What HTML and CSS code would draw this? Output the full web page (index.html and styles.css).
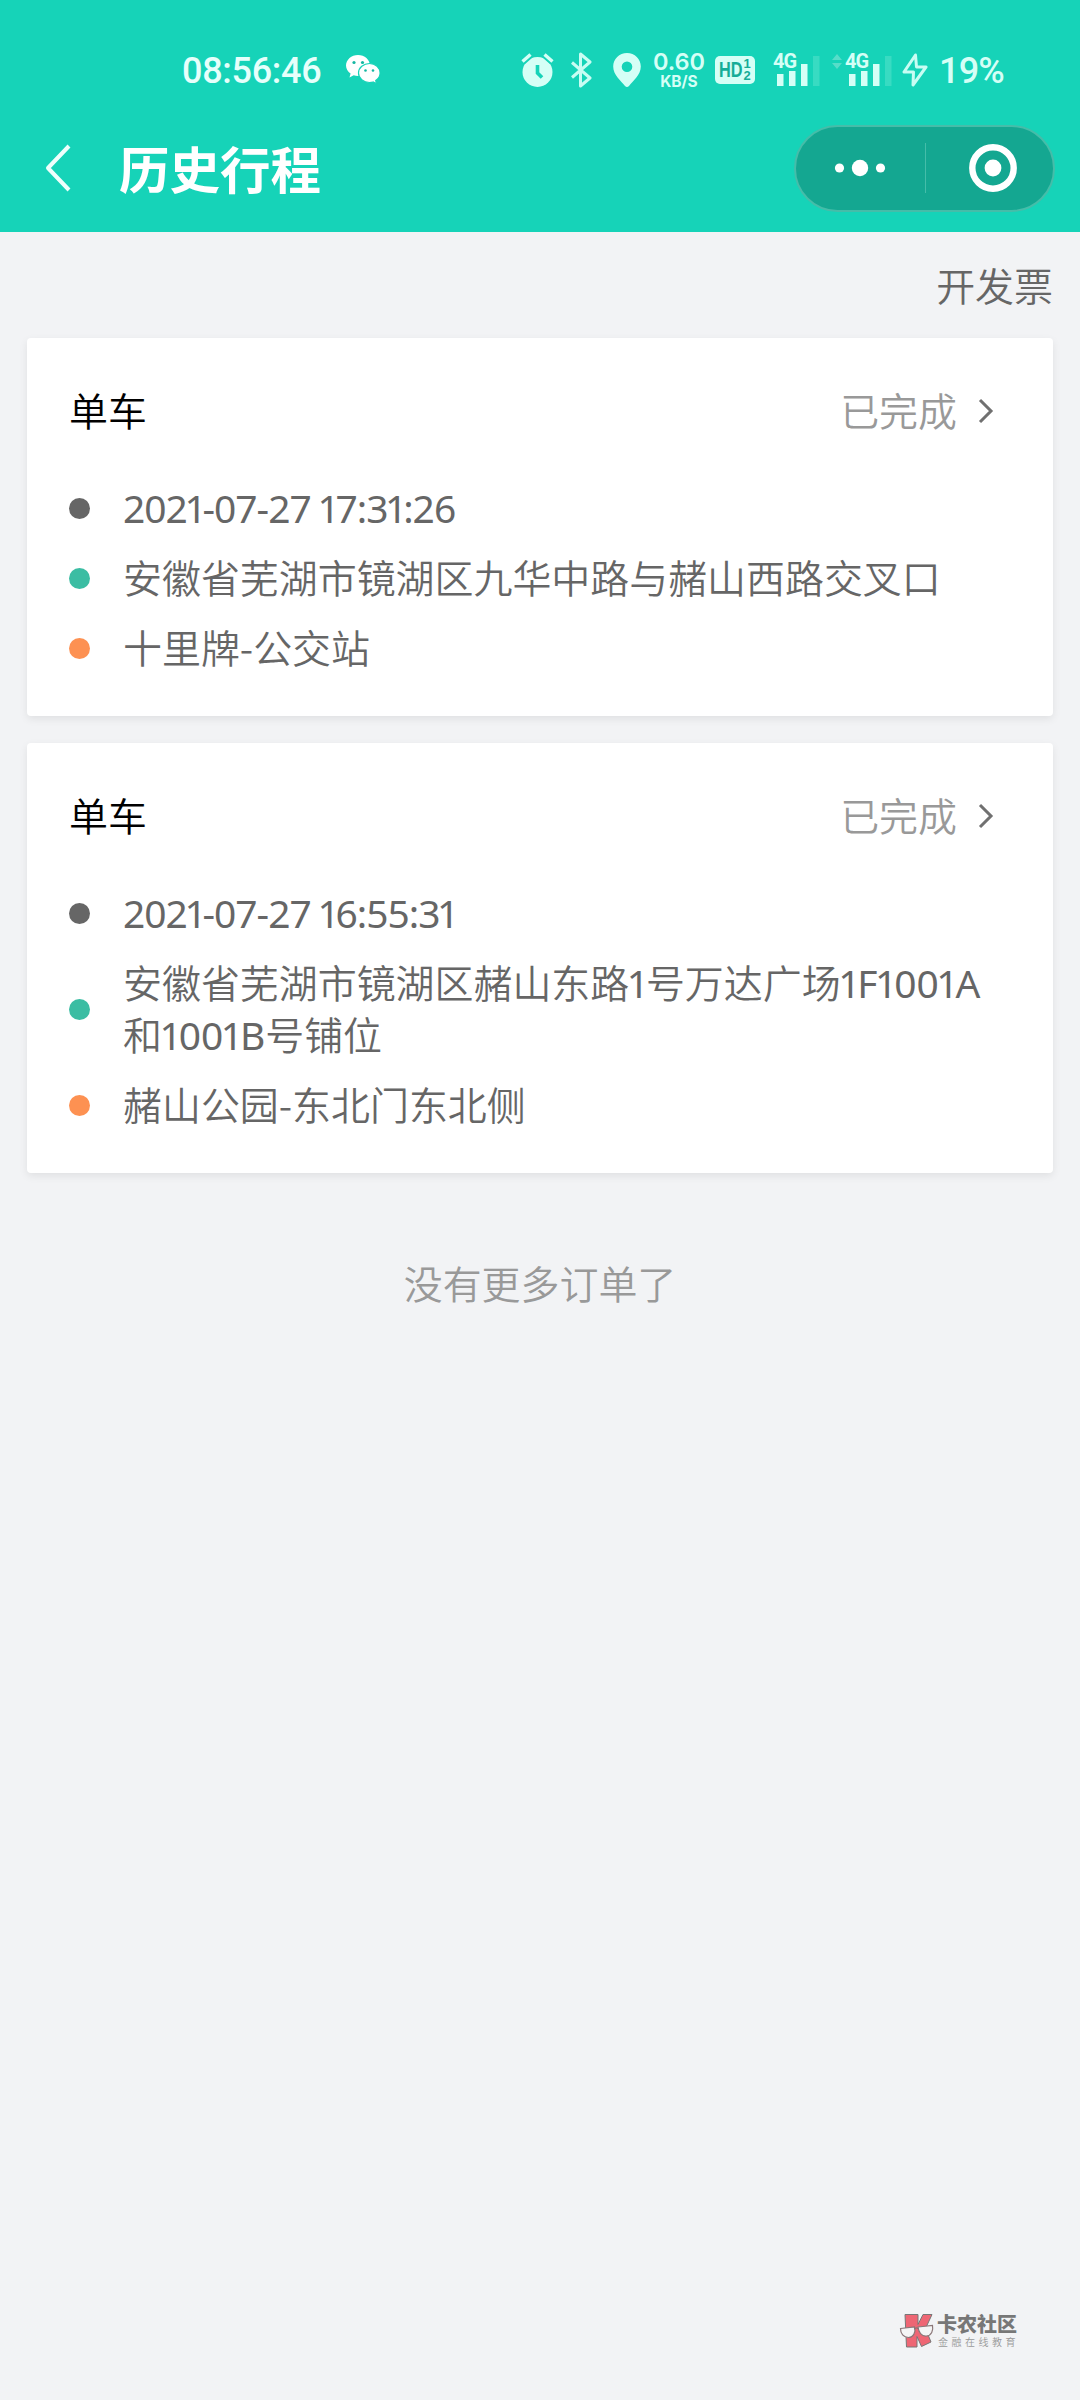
FILE: index.html
```html
<!DOCTYPE html>
<html lang="zh-CN">
<head>
<meta charset="utf-8">
<title>历史行程</title>
<link rel="stylesheet" href="styles.css">
</head>
<body>
<header class="top">
  <div class="status">
    <div class="status-left">
      <span class="clock">08:56:46</span>
      <svg class="wechat" width="36" height="32" viewBox="0 0 36 32">
        <path fill="#fff" d="M13 1C6.400 1 1 5.700 1 11.500c0 3.300 1.800 6.100 4.600 8L4.500 23.500l4.200-2.200c1.400.4 2.800.7 4.300.7C19.600 22 25 17.300 25 11.500S19.600 1 13 1z"/>
        <path fill="#fff" stroke="#16d3b8" stroke-width="1.200" d="M24.500 9.500C18.500 9.500 13.500 13.700 13.500 19s5 9.500 11 9.500c1.300 0 2.500-.2 3.600-.5l3.500 1.900-.9-3.300c2.700-1.800 4.400-4.500 4.400-7.600 0-5.300-4.600-9.500-10.600-9.500z"/>
        <g fill="#16b7a2"><circle cx="9" cy="8.500" r="1.600"/><circle cx="17.500" cy="8.500" r="1.600"/><circle cx="20.500" cy="16.500" r="1.300"/><circle cx="28" cy="16.500" r="1.300"/></g>
      </svg>
    </div>
    <div class="status-right">
      <svg class="alarm" width="34" height="36" viewBox="0 0 34 36">
        <circle cx="16.500" cy="20" r="15" fill="#d5fff6"/>
        <path d="M1.500 9.500l8-7M23.500 2.500l8 7" fill="none" stroke="#16d3b8" stroke-width="7"/>
        <path d="M1.500 9.500l8-7M23.500 2.500l8 7" fill="none" stroke="#d5fff6" stroke-width="3.400"/>
        <path d="M16.500 13v8l4.500 4.500" fill="none" stroke="#16d3b8" stroke-width="3.600"/>
      </svg>
      <svg class="bt" width="24" height="36" viewBox="0 0 24 36">
        <path d="M2 10.500l18 15.500-9.500 8V2l9.500 8L2 25.500" fill="none" stroke="#c8fdf3" stroke-width="3" stroke-linejoin="round"/>
      </svg>
      <svg class="pin" width="30" height="36" viewBox="0 0 30 36">
        <path fill="#d5fff6" fill-rule="evenodd" d="M15 1C7.300 1 1.200 7 1.200 14.500 1.200 23 9 29 13 34q2 2 4 0c4-5 11.800-11 11.800-19.500C28.800 7 22.700 1 15 1zm0 8.500a5.300 5.300 0 1 1 0 10.600 5.300 5.300 0 0 1 0-10.600z"/>
      </svg>
      <div class="speed"><span class="rate">0.60</span><span class="unit">KB/S</span></div>
      <div class="hd"><span class="hd-word">HD</span><span class="hd-nums"><span>1</span><span>2</span></span></div>
      <div class="cell">
        <span class="net">4G</span>
        <svg width="46" height="34" viewBox="0 0 46 34" fill="#d5fff6"><path d="M3 21h6.500v12H3zM15 18h6.500v15H15zM27 11h6.500v22H27z"/><path opacity=".18" d="M39 3h6.500v30H39z"/></svg>
      </div>
      <svg class="updown" width="12" height="34" viewBox="0 0 12 34" fill="#57ddc9"><path d="M6 1l5 6H1zM6 16l5-6H1z"/></svg>
      <div class="cell">
        <span class="net">4G</span>
        <svg width="46" height="34" viewBox="0 0 46 34" fill="#d5fff6"><path d="M3 21h6.500v12H3zM15 18h6.500v15H15zM27 11h6.500v22H27z"/><path opacity=".18" d="M39 3h6.500v30H39z"/></svg>
      </div>
      <svg class="bolt" width="26" height="36" viewBox="0 0 26 36">
        <path d="M13.500 3L2 20h9.500l-.5 13L24 15h-9.500z" fill="none" stroke="#c8fdf3" stroke-width="3" stroke-linejoin="round"/>
      </svg>
      <span class="battery">19%</span>
    </div>
  </div>
  <nav class="bar">
    <svg class="back" width="28" height="50" viewBox="0 0 28 50"><path d="M25 3L4 25l21 22" fill="none" stroke="#effffc" stroke-width="4" stroke-linejoin="round"/></svg>
    <h1 class="title">历史行程</h1>
    <div class="capsule">
      <svg class="more" width="52" height="18" viewBox="0 0 52 18" fill="#fff"><circle cx="5.500" cy="9" r="4.600"/><circle cx="26" cy="9" r="8.200"/><circle cx="46.500" cy="9" r="4.600"/></svg>
      <span class="divider"></span>
      <svg class="target" width="48" height="48" viewBox="0 0 48 48"><circle cx="24" cy="24" r="20.700" fill="none" stroke="#fff" stroke-width="6.400"/><circle cx="24" cy="24" r="8.400" fill="#fff"/></svg>
    </div>
  </nav>
</header>

<main class="page">
  <a class="invoice">开发票</a>

  <section class="card">
    <div class="card-head">
      <span class="kind">单车</span>
      <span class="state">已完成</span>
      <svg class="more-arrow" width="16" height="28" viewBox="0 0 16 28"><path d="M2 3l11 11L2 25" fill="none" stroke="#707070" stroke-width="3"/></svg>
    </div>
    <ul class="rows">
      <li class="row"><i class="dot time"></i><span class="text num date">202<b>1</b>-07-27 <b>1</b>7:3<b>1</b>:26</span></li>
      <li class="row"><i class="dot from"></i><span class="text">安徽省芜湖市镜湖区九华中路与赭山西路交叉口</span></li>
      <li class="row"><i class="dot to"></i><span class="text">十里牌-公交站</span></li>
    </ul>
  </section>

  <section class="card">
    <div class="card-head">
      <span class="kind">单车</span>
      <span class="state">已完成</span>
      <svg class="more-arrow" width="16" height="28" viewBox="0 0 16 28"><path d="M2 3l11 11L2 25" fill="none" stroke="#707070" stroke-width="3"/></svg>
    </div>
    <ul class="rows">
      <li class="row"><i class="dot time"></i><span class="text num date">202<b>1</b>-07-27 <b>1</b>6:55:3<b>1</b></span></li>
      <li class="row"><i class="dot from"></i><span class="text">安徽省芜湖市镜湖区赭山东路<span class="num"><b>1</b></span>号万达广场<span class="num"><b>1</b>F<b>1</b>00<b>1</b>A</span><br>和<span class="num"><b>1</b>00<b>1</b>B</span>号铺位</span></li>
      <li class="row"><i class="dot to"></i><span class="text">赭山公园-东北门东北侧</span></li>
    </ul>
  </section>

  <p class="end">没有更多订单了</p>

  <footer class="mark">
    <svg width="36" height="36" viewBox="0 0 36 36">
      <path fill="#ee6674" stroke="#777" stroke-width="1" d="M6 1.500h13v10l5-10h9l-6.500 14L32 29l-9.500 4.500-4.500-10V34H7.500z"/>
      <path fill="#f4f4f5" stroke="#8b7779" stroke-width="1.200" d="M1.500 15.500l14-1.500c1.500 5-1 10.500-6 10.500s-8-4-8-9zM19 14l14.500-1.500c1 5-1 10-6 10.500-5 .5-8-4-8.500-9z"/>
      <path d="M15 16q2-2 4.500-.5" stroke="#777" fill="none"/>
    </svg>
    <div class="mark-text"><span class="mark-name">卡农社区</span><span class="mark-sub">金融在线教育</span></div>
  </footer>
</main>
</body>
</html>
```

FILE: styles.css
```css
* { box-sizing: border-box; }
body {
  margin: 0;
  width: 1080px;
  min-height: 2400px;
  display: flex;
  flex-direction: column;
  background: #f2f3f5;
  font-family: "Noto Sans CJK SC", "Noto Sans", sans-serif;
  font-size: 38.950px;
  font-weight: 350;
  color: #666;
}
svg { display: block; flex: none; }

.top { height: 232px; background: #16d3b8; color: #d5fff6; }
.status { height: 104px; padding: 36px 77px 0 182px; display: flex; justify-content: space-between; }
.status-left, .status-right { display: flex; align-items: center; height: 68px; }
.clock, .battery { font: 500 36px/68px Roboto, sans-serif; letter-spacing: -.3px; padding-top: 1px; }
.clock { width: 163px; color: #e6fffb; }
.battery { width: 64px; margin-left: 11px; letter-spacing: -.8px; }
.bt { margin-left: 15px; }
.pin { margin-left: 18px; }
.speed { width: 54px; margin-left: 10px; display: flex; flex-direction: column; align-items: center; }
.rate { font: 600 23.500px/20px Inter, sans-serif; }
.unit { font: 700 15.500px/15px Inter, sans-serif; margin-top: 2px; }
.hd {
  width: 40px; height: 28px; margin-left: 9px; border-radius: 5px;
  display: flex; align-items: center; justify-content: center;
  background: #d5fff6; color: #15ad98;
}
.hd-word { font: 700 22px/28px "Liberation Sans", sans-serif; width: 24px; transform: scaleX(.74); transform-origin: left; }
.hd-nums { display: flex; flex-direction: column; font: 700 13px/12px "Liberation Sans", sans-serif; }
.cell { position: relative; margin-left: 19px; }
.updown { margin-left: 11px; }
.updown + .cell { margin-left: 3px; }
.net { position: absolute; left: -1px; top: -1px; font: 700 20px/18px Roboto, sans-serif; letter-spacing: -1px; }
.bolt { margin-left: 10px; }

.bar { height: 128px; padding: 0 25px 0 44px; display: flex; align-items: center; }
.title { margin: -2px auto 0 47px; font-size: 50.500px; line-height: 70px; font-weight: 700; color: #fff; }
.capsule {
  width: 261px; height: 87px; border: 2px solid #45bda9; border-radius: 44px;
  background: #14a791; display: flex; align-items: center;
}
.more { margin-left: 38px; }
.divider { width: 1px; height: 50px; margin-left: 39px; background: #45bda9; }
.target { margin-left: 43px; }

.page { flex: 1; padding: 26px 27px 0; display: flex; flex-direction: column; }
.invoice { align-self: flex-end; height: 52px; line-height: 52px; margin-bottom: 28px; }
.card {
  margin-bottom: 27px; padding: 0 43px 42px; background: #fff; border-radius: 4px;
  box-shadow: 0 3px 9px rgba(0, 0, 0, .08);
}
.card-head {
  height: 144px; padding: 45px 16px 0 0; line-height: 52px;
  display: flex; align-items: flex-start;
}
.kind { margin: 0 auto 0 -1px; color: #000; }
.state { color: #999; }
.more-arrow { margin: 14px 0 0 21px; }
.rows { list-style: none; margin: 0; padding: 0; display: flex; flex-direction: column; gap: 18px; }
.row { display: flex; align-items: center; line-height: 52px; }
.dot { width: 21px; height: 21px; margin-left: -1px; border-radius: 50%; flex: none; }
.time { background: #666; }
.from { background: #3bbda3; }
.to { background: #fd9152; }
.text { margin: -2px 0 2px 33px; white-space: nowrap; }
.num { font-family: "Noto Sans", sans-serif; font-weight: 400; }
.text .num { line-height: 0; }
.num b { font-weight: inherit; letter-spacing: -3.200px; margin-left: -2.400px; }
.date { letter-spacing: -1px; margin-top: 0; margin-bottom: 0; }
.date b { letter-spacing: -4.200px; }
.end { margin: 56px 0 0; line-height: 52px; text-align: center; color: #999; }

.mark { margin: auto 36px 51px auto; display: flex; align-items: center; gap: 2px; }
.mark-text { display: flex; flex-direction: column; }
.mark-name { font-size: 20px; line-height: 22px; font-weight: 900; color: #777; }
.mark-sub { font-size: 10px; line-height: 14px; letter-spacing: 3.500px; padding-left: 1px; margin-right: -4px; color: #999; }
```
